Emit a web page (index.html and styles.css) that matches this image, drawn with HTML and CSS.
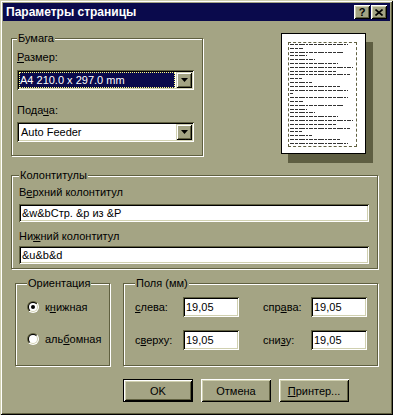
FILE: index.html
```html
<!DOCTYPE html>
<html lang="ru">
<head>
    <meta charset="UTF-8">
    <title>Параметры страницы</title>
    <link rel="stylesheet" href="styles.css">
</head>
<body>
    <div class="window">
        <div class="titlebar">
            <span class="title">Параметры страницы</span>
            <div class="caption-btns">
                <span class="cbtn">?</span>
                <span class="cbtn">
                    <svg width="8" height="7" viewBox="0 0 8 7"><path d="M0.5 0.5L7.5 6.5M7.5 0.5L0.5 6.5" stroke="#000" stroke-width="1.6"/></svg>
                </span>
            </div>
        </div>

        <div class="content">
            <div class="top">
                <fieldset class="group paper-group">
                    <legend>Бумага</legend>
                    <div class="label"><u>Р</u>азмер:</div>
                    <div class="combo focused">
                        <span class="combo-value">A4 210.0 x 297.0 mm</span>
                        <span class="combo-btn"><svg width="7" height="4" viewBox="0 0 7 4"><path d="M0 0H7L3.5 4Z" fill="#000"/></svg></span>
                    </div>
                    <div class="label label-gap">Пода<u>ч</u>а:</div>
                    <div class="combo combo-near">
                        <span class="combo-value">Auto Feeder</span>
                        <span class="combo-btn"><svg width="7" height="4" viewBox="0 0 7 4"><path d="M0 0H7L3.5 4Z" fill="#000"/></svg></span>
                    </div>
                </fieldset>

                <div class="preview">
                    <div class="sheet">
                        <div class="margins">
                            <svg width="67" height="103" viewBox="0 0 67 103">
                                <path d="M1 1.5h58M1 5.5h13M1 9.5h53M1 12.5h17M1 16.5h25M1 20.5h48M1 24.5h63M1 28.5h47M1 31.5h60M1 35.5h12M1 39.5h22M1 43.5h50M1 47.5h58M1 50.5h3M1 54.5h58M1 58.5h13M1 62.5h53M1 66.5h17M1 69.5h25M1 73.5h48M1 77.5h63M1 81.5h47M1 85.5h60M1 88.5h12M1 92.5h22M1 96.5h50M1 100.5h58" stroke="#333" stroke-width="1" stroke-dasharray="4 1 3 1 6 1 2 1" shape-rendering="crispEdges"/>
                            </svg>
                        </div>
                    </div>
                </div>
            </div>

            <fieldset class="group headers-group">
                <legend>Колонтитулы</legend>
                <div class="label">В<u>е</u>рхний колонтитул</div>
                <div class="field field-first">&amp;w&amp;bСтр. &amp;p из &amp;P</div>
                <div class="label label-mid">Ни<u>ж</u>ний колонтитул</div>
                <div class="field field-second">&amp;u&amp;b&amp;d</div>
            </fieldset>

            <div class="bottom">
                <fieldset class="group orient-group">
                    <legend>Ориентация</legend>
                    <div class="radio">
                        <svg width="12" height="12" viewBox="0 0 12 12">
                            <defs>
                                <linearGradient id="ro1" x1="0" y1="0" x2="1" y2="1"><stop offset="0.5" stop-color="#606040"/><stop offset="0.5" stop-color="#fff"/></linearGradient>
                                <linearGradient id="ri1" x1="0" y1="0" x2="1" y2="1"><stop offset="0.5" stop-color="#000"/><stop offset="0.5" stop-color="#d0d0b0"/></linearGradient>
                            </defs>
                            <circle cx="6" cy="6" r="6" fill="url(#ro1)"/>
                            <circle cx="6" cy="6" r="5" fill="url(#ri1)"/>
                            <circle cx="6" cy="6" r="4" fill="#fff"/>
                            <circle cx="6" cy="6" r="2" fill="#000"/>
                        </svg>
                        <span>к<u>н</u>ижная</span>
                    </div>
                    <div class="radio radio-second">
                        <svg width="12" height="12" viewBox="0 0 12 12">
                            <defs>
                                <linearGradient id="ro2" x1="0" y1="0" x2="1" y2="1"><stop offset="0.5" stop-color="#606040"/><stop offset="0.5" stop-color="#fff"/></linearGradient>
                                <linearGradient id="ri2" x1="0" y1="0" x2="1" y2="1"><stop offset="0.5" stop-color="#000"/><stop offset="0.5" stop-color="#d0d0b0"/></linearGradient>
                            </defs>
                            <circle cx="6" cy="6" r="6" fill="url(#ro2)"/>
                            <circle cx="6" cy="6" r="5" fill="url(#ri2)"/>
                            <circle cx="6" cy="6" r="4" fill="#fff"/>
                        </svg>
                        <span>аль<u>б</u>омная</span>
                    </div>
                </fieldset>

                <fieldset class="group margins-group">
                    <legend>Поля (мм)</legend>
                    <div class="margins-grid">
                        <span class="mlabel"><u>с</u>лева:</span>
                        <div class="num">19,05</div>
                        <span class="mlabel">спр<u>а</u>ва:</span>
                        <div class="num">19,05</div>
                        <span class="mlabel">с<u>в</u>ерху:</span>
                        <div class="num">19,05</div>
                        <span class="mlabel">сни<u>з</u>у:</span>
                        <div class="num">19,05</div>
                    </div>
                </fieldset>
            </div>

            <div class="actions">
                <div class="btn default">OK</div>
                <div class="btn">Отмена</div>
                <div class="btn"><span><u>П</u>ринтер...</span></div>
            </div>
        </div>
    </div>
</body>
</html>
```

FILE: styles.css
```css
body {
    margin: 0;
    font-family: "Liberation Sans", Arial, sans-serif;
    font-size: 11px;
    color: #000;
}

.window {
    width: 393px;
    height: 415px;
    box-sizing: border-box;
    padding: 3px;
    background-color: #a4a484;
    box-shadow: inset 1px 1px 0 #d0d0b0, inset -1px -1px 0 #000,
                inset 2px 2px 0 #fff, inset -2px -2px 0 #606040;
}

.titlebar {
    height: 18px;
    background-color: #0a0a4c;
    color: #fff;
    display: flex;
    align-items: center;
    justify-content: space-between;
    padding: 0 3px;
}

.title {
    font-weight: bold;
    font-size: 12px;
}

.caption-btns {
    display: flex;
    gap: 1px;
}

.cbtn {
    width: 16px;
    height: 14px;
    box-sizing: border-box;
    background-color: #a4a484;
    color: #000;
    font-weight: bold;
    font-size: 11px;
    display: flex;
    align-items: center;
    justify-content: center;
    box-shadow: inset 1px 1px 0 #fff, inset -1px -1px 0 #000,
                inset 2px 2px 0 #d0d0b0, inset -2px -2px 0 #606040;
}

.content {
    padding: 10px 0 0 8px;
}

.top {
    display: flex;
    align-items: flex-start;
}

.group {
    margin: 0;
    min-width: 0;
    box-sizing: border-box;
    border: 1px solid #606040;
    box-shadow: 1px 1px 0 #fff, inset 1px 1px 0 #fff;
}

.group legend {
    padding: 0 1px;
    line-height: 14px;
    background-color: #a4a484;
}

.label {
    line-height: 14px;
    height: 14px;
}

.label-gap {
    margin-top: 13px;
}

.label-mid {
    margin-top: 7px;
}

/* Бумага */
.paper-group {
    width: 192px;
    padding: 5px 8px 13px 5px;
}

.combo {
    display: flex;
    height: 20px;
    margin-top: 6px;
    padding: 2px;
    box-sizing: border-box;
    background-color: #fff;
    box-shadow: inset 1px 1px 0 #606040, inset -1px -1px 0 #fff,
                inset 2px 2px 0 #000, inset -2px -2px 0 #d0d0b0;
}

.combo-near {
    margin-top: 5px;
}

.combo-value {
    flex: 1;
    display: flex;
    align-items: center;
    padding-left: 2px;
    white-space: nowrap;
}

.combo.focused .combo-value {
    background-color: #0a0a4c;
    color: #fff;
    outline: 1px dotted #ffff80;
    outline-offset: -1px;
    margin-right: 1px;
    padding-left: 1px;
}

.combo-btn {
    width: 16px;
    height: 16px;
    box-sizing: border-box;
    background-color: #a4a484;
    display: flex;
    align-items: center;
    justify-content: center;
    box-shadow: inset 1px 1px 0 #d0d0b0, inset -1px -1px 0 #000,
                inset 2px 2px 0 #fff, inset -2px -2px 0 #606040;
}

/* предпросмотр */
.preview {
    margin: 2px 0 0 78px;
}

.sheet {
    width: 85px;
    height: 121px;
    box-sizing: border-box;
    border: 1px solid #000;
    background-color: #fff;
    padding: 8px 8px 6px 6px;
    box-shadow: 7px 9px 0 #5e5e42;
}

.margins {
    height: 100%;
    box-sizing: border-box;
    border: 1px dashed #606040;
}

.margins svg {
    display: block;
}

/* Колонтитулы */
.headers-group {
    width: 367px;
    margin-top: 12px;
    padding: 3px 8px 4px 7px;
}

.field {
    height: 18px;
    box-sizing: border-box;
    padding: 0 3px;
    display: flex;
    align-items: center;
    white-space: nowrap;
    background-color: #fff;
    box-shadow: inset 1px 1px 0 #606040, inset -1px -1px 0 #fff,
                inset 2px 2px 0 #000, inset -2px -2px 0 #d0d0b0;
}

.field-first {
    margin-top: 5px;
}

.field-second {
    margin-top: 3px;
}

/* Ориентация и поля */
.bottom {
    display: flex;
    margin-top: 7px;
}

.orient-group {
    width: 95px;
    margin-left: 4px;
    padding: 10px 4px 15px 11px;
}

.radio {
    display: flex;
    align-items: center;
    gap: 6px;
    height: 14px;
}

.radio svg {
    display: block;
}

.radio-second {
    margin-top: 18px;
}

.margins-group {
    width: 255px;
    margin-left: 13px;
    padding: 7px 10px 15px 11px;
}

.margins-grid {
    display: grid;
    grid-template-columns: 48px 80px 48px 56px;
    grid-auto-rows: 20px;
    row-gap: 13px;
    align-items: center;
}

.num {
    width: 56px;
    height: 20px;
    box-sizing: border-box;
    padding: 0 3px;
    display: flex;
    align-items: center;
    background-color: #fff;
    box-shadow: inset 1px 1px 0 #606040, inset -1px -1px 0 #fff,
                inset 2px 2px 0 #000, inset -2px -2px 0 #d0d0b0;
}

/* кнопки */
.actions {
    display: flex;
    gap: 8px;
    margin: 13px 0 0 112px;
}

.btn {
    width: 70px;
    height: 23px;
    box-sizing: border-box;
    display: flex;
    align-items: center;
    justify-content: center;
    box-shadow: inset 1px 1px 0 #fff, inset -1px -1px 0 #000,
                inset 2px 2px 0 #d0d0b0, inset -2px -2px 0 #606040;
}

.btn.default {
    border: 1px solid #000;
}
```
